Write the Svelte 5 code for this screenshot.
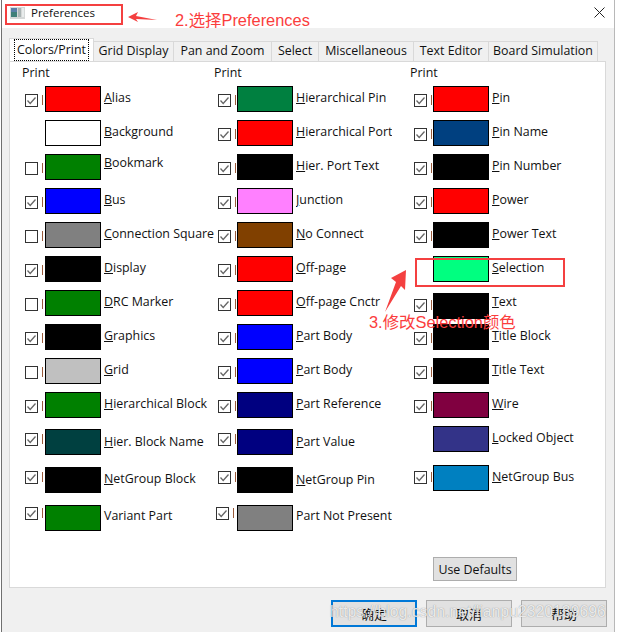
<script>
	const K = '#000000', R = '#ff0000', G = '#008000', B = '#0000ff', N = '#000080', GR = '#808080';

	// ck: null hides the box; gap is the space under a row when it is not 8
	const columns = [
		[
			{ t: 'Alias', c: R, ck: true },
			{ t: 'Background', c: '#ffffff', ck: null },
			{ t: 'Bookmark', c: G, ck: false, lift: 3 },
			{ t: 'Bus', c: B, ck: true },
			{ t: 'Connection Square', c: GR, ck: false },
			{ t: 'Display', c: K, ck: true },
			{ t: 'DRC Marker', c: G, ck: false },
			{ t: 'Graphics', c: K, ck: true },
			{ t: 'Grid', c: '#c0c0c0', ck: false },
			{ t: 'Hierarchical Block', c: G, ck: true, gap: 11 },
			{ t: 'Hier. Block Name', c: '#004040', ck: true, gap: 12, box: 4, lift: -1 },
			{ t: 'NetGroup Block', c: K, ck: true, gap: 12, box: 4 },
			{ t: 'Variant Part', c: G, ck: true, plain: true, box: 2, lift: 1 }
		],
		[
			{ t: 'Hierarchical Pin', c: '#008040', ck: true },
			{ t: 'Hierarchical Port', c: R, ck: true },
			{ t: 'Hier. Port Text', c: K, ck: true },
			{ t: 'Junction', c: '#ff80ff', ck: true },
			{ t: 'No Connect', c: '#804000', ck: true },
			{ t: 'Off-page', c: R, ck: true },
			{ t: 'Off-page Cnctr', c: R, ck: true },
			{ t: 'Part Body', c: B, ck: true },
			{ t: 'Part Body', c: B, ck: true },
			{ t: 'Part Reference', c: N, ck: true, gap: 11 },
			{ t: 'Part Value', c: N, ck: true, gap: 12, box: 4, lift: -1 },
			{ t: 'NetGroup Pin', c: K, ck: true, gap: 12, box: 4, lift: -1 },
			{ t: 'Part Not Present', c: GR, ck: true, plain: true, box: 2, lift: 1, shift: 2 }
		],
		[
			{ t: 'Pin', c: R, ck: true },
			{ t: 'Pin Name', c: '#004080', ck: true },
			{ t: 'Pin Number', c: K, ck: true },
			{ t: 'Power', c: R, ck: true },
			{ t: 'Power Text', c: K, ck: true },
			{ t: 'Selection', c: '#00ff80', ck: null, gap: 11 },
			{ t: 'Text', c: K, ck: true, gap: 5, box: 6, lift: 3 },
			{ t: 'Title Block', c: K, ck: true },
			{ t: 'Title Text', c: K, ck: true },
			{ t: 'Wire', c: '#800040', ck: true },
			{ t: 'Locked Object', c: '#333388', ck: null, gap: 13 },
			{ t: 'NetGroup Bus', c: '#0080c0', ck: true, box: 6 }
		]
	];

	const tabs = ['Colors/Print', 'Grid Display', 'Pan and Zoom', 'Select', 'Miscellaneous', 'Text Editor', 'Board Simulation'];
</script>

<div class="win">
	<header class="title">
		<svg class="app-icon" width="15" height="12" viewBox="0 0 15 12">
			<rect width="15" height="12" fill="#d5d8d8" />
			<rect x="1" y="1" width="6" height="9" fill="#3f7f78" />
			<rect x="1" y="1" width="6" height="4" fill="#5a7fa8" />
			<rect x="8" y="1" width="3" height="9" fill="#aab4b4" />
			<rect x="12" y="1" width="2" height="9" fill="#e8ecec" />
		</svg>
		<span>Preferences</span>
		<svg class="close" width="11" height="11" viewBox="0 0 11 11">
			<path d="M0.5 0.5L10.5 10.5M10.5 0.5L0.5 10.5" stroke="#222" stroke-width="1" fill="none" />
		</svg>
	</header>

	<div class="tabs">
		{#each tabs as tab, i}
			<div class="tab" class:active={i === 0}><span>{tab}</span></div>
		{/each}
	</div>

	<section class="panel">
		<div class="cols">
			{#each columns as rows}
				<div class="col">
					<div class="print">Print</div>
					{#each rows as r}
						<div class="row" style="margin-bottom:{r.gap ?? 8}px">
							{#if r.ck !== null}
								<div class="mark" style="margin-top:{r.box ?? 8}px; margin-left:{-(r.shift ?? 0)}px; margin-right:{r.shift ?? 0}px">
									<svg width="13" height="13" viewBox="0 0 13 13">
										<rect x="0.5" y="0.5" width="12" height="12" fill="#fff" stroke="#333" />
										{#if r.ck}
											<path d="M2.5 6.5L5.2 9.5L10.5 3.5" fill="none" stroke="#666" stroke-width="1.3" />
										{/if}
									</svg>
									<i></i>
								</div>
							{:else}
								<div class="mark"></div>
							{/if}
							<div class="swatch" style="background:{r.c}"></div>
							<div class="label" style="margin-top:{4 - (r.lift ?? 0)}px">
								{#if r.plain}{r.t}{:else}<u>{r.t[0]}</u>{r.t.slice(1)}{/if}
							</div>
						</div>
					{/each}
				</div>
			{/each}
		</div>
		<div class="defaults">
			<button class="btn">Use Defaults</button>
		</div>
	</section>

	<footer class="foot">
		<button class="btn big primary">确定</button>
		<button class="btn big">取消</button>
		<button class="btn big">帮助</button>
	</footer>
</div>

<!-- screenshot markup drawn on top of the dialog -->
<div class="box box-title"></div>
<div class="box box-sel"></div>
<div class="note note-2">2.选择Preferences</div>
<div class="note note-3">3.修改Selection颜色</div>
<svg class="arrows" width="618" height="632" viewBox="0 0 618 632">
	<polygon points="128,17 138,12 136,16 157,20 136,19 138,22" fill="#f44040" />
	<polygon points="406,270 391,278 396,282 385,312 401,286 405,290" fill="#f44040" />
</svg>
<div class="wm">https://blog.csdn.net/lianpu2320139696</div>

<style>
	:global(body) {
		background: #fff;
		font-family: "Open Sans", "Noto Sans CJK SC", sans-serif;
	}
	.win {
		box-sizing: border-box;
		width: 614px;
		height: 632px;
		margin-left: 1px;
		border-left: 1px solid #707070;
		border-right: 1px solid #b8b8b8;
		background: #f0f0f0;
		display: flex;
		flex-direction: column;
		font-size: 12.4px;
		color: #111;
	}
	.title {
		height: 28px;
		flex: none;
		background: #fff;
		display: flex;
		align-items: flex-start;
		padding: 7px 9px 0 8px;
		box-sizing: border-box;
		font-size: 11.5px;
		line-height: 12px;
		gap: 6px;
	}
	.app-icon {
		flex: none;
	}
	.close {
		margin-left: auto;
		margin-right: 0;
	}
	.tabs {
		display: flex;
		align-items: flex-end;
		height: 33px;
		flex: none;
		padding-left: 7px;
	}
	.tab {
		box-sizing: border-box;
		height: 20px;
		margin-bottom: 0;
		padding-bottom: 2px;
		border: 1px solid #d9d9d9;
		border-bottom: none;
		border-left: none;
		background: #f0f0f0;
		display: flex;
		justify-content: center;
		align-items: center;
		line-height: 16px;
		white-space: nowrap;
	}
	.tab:nth-child(1) { width: 85px; height: 24px; background: #fff; border-left: 1px solid #d9d9d9; margin-bottom: -1px; position: relative; }
	.tab:nth-child(2) { width: 80px; }
	.tab:nth-child(3) { width: 98px; }
	.tab:nth-child(4) { width: 47px; }
	.tab:nth-child(5) { width: 95px; }
	.tab:nth-child(6) { width: 75px; }
	.tab:nth-child(7) { width: 109px; }
	.tab.active span {
		outline: 1px dotted #000;
		padding: 2px 2px 2px 2px;
		margin-top: 1px;
	}
	.panel {
		box-sizing: border-box;
		height: 527px;
		flex: none;
		margin: 0 8px 0 7px;
		border: 1px solid #d9d9d9;
		background: #fff;
		position: relative;
		padding: 3px 0 0 12px;
		display: flex;
		flex-direction: column;
	}
	.cols {
		display: flex;
		flex: 1;
	}
	.col:nth-child(1) { width: 192px; }
	.col:nth-child(2) { width: 196px; }
	.print {
		height: 17px;
		line-height: 16px;
		margin-bottom: 4px;
	}
	.row {
		display: flex;
		height: 26px;
		padding-left: 3px;
	}
	.col:nth-child(n + 2) .row {
		padding-left: 4px;
	}
	.mark {
		width: 20px;
		flex: none;
		display: flex;
		align-items: flex-start;
		height: 13px;
	}
	.col:nth-child(n + 2) .mark {
		width: 19px;
	}
	.mark svg {
		display: block;
		flex: none;
	}
	.mark i {
		display: block;
		width: 1px;
		height: 10px;
		margin: 1px 0 0 4px;
		background: #9a5a3a;
	}
	.swatch {
		box-sizing: border-box;
		width: 56px;
		height: 26px;
		flex: none;
		border: 1px solid #000;
	}
	.label {
		margin-left: 3px;
		height: 16px;
		line-height: 16px;
		white-space: nowrap;
	}
	.col:nth-child(2) .label {
		width: 96px;
		overflow: hidden;
	}
	.defaults {
		display: flex;
		justify-content: flex-start;
		padding: 0 0 6px 411px;
	}
	.btn {
		box-sizing: border-box;
		width: 84px;
		height: 24px;
		padding: 0;
		border: 1px solid #adadad;
		background: #e1e1e1;
		font: inherit;
		color: #111;
	}
	.foot {
		display: flex;
		gap: 9px;
		padding: 12px 0 0 329px;
	}
	.btn.big {
		width: 86px;
		height: 27px;
		font-size: 13px;
		font-family: "Noto Sans CJK SC", sans-serif;
	}
	.btn.primary {
		border: 2px solid #0078d7;
	}
	.box {
		position: absolute;
		box-sizing: border-box;
		border: 2px solid #f44040;
	}
	.box-title {
		left: 5px;
		top: 4px;
		width: 118px;
		height: 21px;
	}
	.box-sel {
		left: 415px;
		top: 258px;
		width: 150px;
		height: 29px;
	}
	.note {
		position: absolute;
		color: #fb3d3d;
		white-space: nowrap;
		font-family: "Liberation Sans", "Noto Sans CJK SC", sans-serif;
	}
	.note-2 {
		left: 175px;
		top: 10px;
		font-size: 16.4px;
		line-height: 20px;
	}
	.note-3 {
		left: 369px;
		top: 313px;
		font-size: 16.4px;
		line-height: 18px;
	}
	.arrows {
		position: absolute;
		left: 0;
		top: 0;
		pointer-events: none;
	}
	.wm {
		position: absolute;
		left: 330px;
		top: 603px;
		font: 15.8px "Liberation Sans", sans-serif;
		color: rgba(255, 255, 255, 0.82);
		text-shadow: 0 0 1px rgba(90, 90, 90, 0.7);
		white-space: nowrap;
	}
</style>
